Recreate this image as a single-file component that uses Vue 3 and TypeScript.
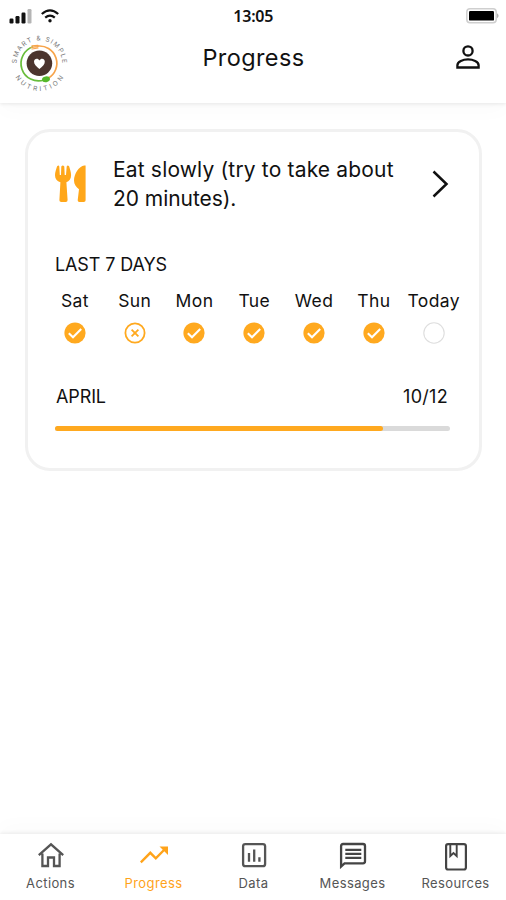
<script setup lang="ts">
type DayState = 'done' | 'missed' | 'open'

interface Day {
  label: string
  state: DayState
}

const days: Day[] = [
  { label: 'Sat', state: 'done' },
  { label: 'Sun', state: 'missed' },
  { label: 'Mon', state: 'done' },
  { label: 'Tue', state: 'done' },
  { label: 'Wed', state: 'done' },
  { label: 'Thu', state: 'done' },
  { label: 'Today', state: 'open' },
]

const completed = 10
const total = 12
const percent = `${(completed / total) * 99.6}%`
</script>

<template>
  <div class="screen">
    <header class="top">
      <div class="status">
        <div class="signals">
          <svg width="24" height="15" viewBox="0 0 24 15">
            <rect x="0.5" y="9.5" width="4" height="5" rx="1.2" fill="#111" />
            <rect x="6.5" y="7" width="4" height="7.5" rx="1.2" fill="#111" />
            <rect x="12.5" y="3.5" width="4" height="11" rx="1.2" fill="#111" />
            <rect x="18.5" y="0" width="4" height="14.5" rx="1.2" fill="#b5b5b5" />
          </svg>
          <svg class="wifi" width="18" height="14" viewBox="0 0 18 14" fill="none" stroke="#111" stroke-width="2.2">
            <path d="M0.8 5Q9-2.4 17.2 5" />
            <path d="M4.2 8.7Q9 4.6 13.8 8.7" />
            <circle cx="9" cy="11.7" r="1.7" fill="#111" stroke="none" />
          </svg>
        </div>
        <div class="clock">13:05</div>
        <svg class="battery" width="34" height="16" viewBox="0 0 34 16">
          <rect x="0.8" y="0.8" width="29.4" height="14" rx="3.2" fill="#fff" stroke="#cfcfcf" stroke-width="1.5" />
          <rect x="3" y="3" width="25" height="9.6" rx="1.2" fill="#000" />
          <path d="M31.4 5.2Q33.4 7.7 31.4 10.2Z" fill="#888" />
        </svg>
      </div>
      <div class="bar">
        <svg class="logo" width="60" height="60" viewBox="0 0 60 60">
          <defs>
            <path id="arc-top" d="M6.7 31.3A22.8 22.8 0 0 1 52.3 31.3" />
            <path id="arc-bottom" d="M3.5 41.5A28 28 0 0 0 55.5 41.5" />
          </defs>
          <text class="logo-text"><textPath href="#arc-top" startOffset="0" textLength="71">SMART &amp; SIMPLE</textPath></text>
          <text class="logo-text"><textPath href="#arc-bottom" startOffset="4" textLength="58">NUTRITION</textPath></text>
          <circle cx="29.4" cy="31.3" r="12.8" fill="#4b342e" />
          <path d="M23 14.8A17.3 17.3 0 0 0 34 48" fill="none" stroke="#68bd3b" stroke-width="1.7" />
          <path d="M27 14.2A17.3 17.3 0 0 1 38 46.4" fill="none" stroke="#f7a44b" stroke-width="1.7" />
          <path d="M21 15.5L28 14.6M22 17L28 16M22 13.9L28 13.3" stroke="#f7a44b" stroke-width="1.2" stroke-linecap="round" />
          <ellipse cx="36" cy="47.3" rx="4" ry="2.9" fill="#55b82a" transform="rotate(-10 36 47.3)" />
          <path d="M29.4 37C26 34.4 24 32.2 24 29.6C24 26.4 28 25.6 29.4 28.4C31 25.6 34.8 26.4 34.8 29.6C34.8 32.2 33 34.4 29.4 37Z" fill="#fff" />
        </svg>
        <h1 class="title">Progress</h1>
        <svg class="person" width="24" height="24" viewBox="0 0 24 24" fill="none" stroke="#111" stroke-width="2.3">
          <circle cx="12" cy="5.9" r="4.6" />
          <path d="M1.4 22.5V20.3C1.4 16.6 7 14.4 12 14.4S22.6 16.6 22.6 20.3V22.5Z" />
        </svg>
      </div>
    </header>

    <main class="content">
      <section class="card">
        <div class="habit">
          <svg class="cutlery" width="32" height="38" viewBox="0 0 32 38" fill="#ffa71a">
            <path d="M2.1 1.2Q3.8-.2 4.3 1.5L4.8 10H6L6.3 1.5Q7.8-.4 9.3 1.5L9.7 10H11L11.7 1.5Q12.5-.2 14.1 1.2C15 4 16.1 7.3 16.1 10.2C16.1 14 14.1 16.2 11.4 17.3L12.6 35Q12.6 37 10.8 37H6.2Q4.3 37 4.4 35L5.4 17.3C2 16.2 0 14 0 10.2C0 7.3 1.2 4 2.1 1.2Z" />
            <path d="M29.3.4H30.6V35.2Q30.6 37 28.8 37H24.4Q22.6 37 22.7 35.2L24 24.2C21.2 22 19 19.5 19 15.5C19 8.5 24 1.2 29.3.4Z" />
          </svg>
          <p class="habit-name">Eat slowly (try to take about<br /><span class="second">20 minutes).</span></p>
          <svg class="chevron" width="17" height="28" viewBox="0 0 17 28" fill="none" stroke="#111" stroke-width="2.5">
            <path d="M1.5 1.5L14.5 14L1.5 26.5" />
          </svg>
        </div>

        <h2 class="label week-label">LAST 7 DAYS</h2>
        <div class="week">
          <div v-for="day in days" :key="day.label" class="day">
            <span class="day-name">{{ day.label }}</span>
            <svg width="22" height="22" viewBox="0 0 22 22" fill="none">
              <template v-if="day.state === 'done'">
                <circle cx="11" cy="11" r="10.6" fill="#ffa91f" />
                <path d="M4.8 11.2L9 15.2L17.2 7" stroke="#fff" stroke-width="2.1" />
              </template>
              <template v-else-if="day.state === 'missed'">
                <circle cx="11" cy="11" r="9.6" stroke="#ffa91f" stroke-width="1.8" />
                <path d="M7.6 7.6L14.4 14.4M14.4 7.6L7.6 14.4" stroke="#ffa91f" stroke-width="1.8" />
              </template>
              <circle v-else cx="11" cy="11" r="10.2" stroke="#dedede" stroke-width="1.1" />
            </svg>
          </div>
        </div>

        <div class="month">
          <span class="label month-name">APRIL</span>
          <span class="label count">{{ completed }}/{{ total }}</span>
        </div>
        <div class="track"><div class="fill" :style="{ width: percent }"></div></div>
      </section>
    </main>

    <nav class="tabs">
      <a class="tab">
        <svg width="28" height="28" viewBox="0 0 28 28" fill="none" stroke="#555" stroke-width="2.3">
          <path d="M1.8 14.2L14 3.3L26.2 14.2M5.4 12.5V25H11V16.5H17V25H22.6V12.5" />
        </svg>
        <span>Actions</span>
      </a>
      <a class="tab active">
        <svg width="28" height="28" viewBox="0 0 28 28" fill="none" stroke="#ffa31a" stroke-width="2.4">
          <path d="M.8 21.3L10.3 11.8L15.8 17.3L25 8" />
          <path d="M19.5 5.5H28V14Z" fill="#ffa31a" stroke="none" />
        </svg>
        <span>Progress</span>
      </a>
      <a class="tab">
        <svg width="28" height="28" viewBox="0 0 28 28" fill="none" stroke="#555" stroke-width="2.3">
          <rect x="3.1" y="3.1" width="22" height="22" rx="2.2" />
          <path d="M9 12V20.8M14.2 8.5V20.8M19.4 16.2V20.8" />
        </svg>
        <span>Data</span>
      </a>
      <a class="tab">
        <svg width="28" height="28" viewBox="0 0 28 28" fill="none" stroke="#444" stroke-width="2.3">
          <path d="M2.1 25.5V5Q2.1 3 4.1 3H24Q26 3 26 5V20.3Q26 22.3 24 22.3H5.5Z" />
          <path d="M6.3 8.8H22.3M6.3 12.8H22.3M6.3 16.8H22.3" />
        </svg>
        <span>Messages</span>
      </a>
      <a class="tab">
        <svg class="book" width="28" height="28" viewBox="0 0 28 28" fill="none" stroke="#444" stroke-width="2.2">
          <rect x="4.1" y="3.1" width="19.8" height="25.4" rx="2" />
          <path d="M8.3 3V15L11.5 12L14.7 15V3" stroke-width="1.9" />
        </svg>
        <span>Resources</span>
      </a>
    </nav>
  </div>
</template>

<style>
body {
  margin: 0;
  background: #fff;
}
</style>

<style scoped>
.screen {
  display: flex;
  flex-direction: column;
  width: 506px;
  height: 900px;
  overflow: hidden;
  background: #fff;
  color: #111;
  font-family: Inter, 'Liberation Sans', sans-serif;
}
svg {
  display: block;
  flex: none;
}
.top {
  height: 103px;
  flex: none;
  box-shadow: 0 1px 4px rgba(0, 0, 0, 0.09), 0 8px 20px rgba(0, 0, 0, 0.02);
}
.status {
  display: grid;
  grid-template-columns: 1fr 60px 1fr;
  align-items: center;
  height: 32px;
  box-sizing: border-box;
  padding: 0 6px 0 9px;
}
.signals {
  display: flex;
  align-items: center;
  gap: 8px;
}
.clock {
  margin-left: -2.5px;
  font-family: 'Noto Sans', sans-serif;
  font-size: 16px;
  font-weight: 600;
  line-height: 32px;
  text-align: center;
  letter-spacing: -0.2px;
}
.battery {
  justify-self: end;
}
.bar {
  display: grid;
  grid-template-columns: 60px 1fr 60px;
  align-items: center;
  height: 60px;
  padding: 0 10px;
}
.logo {
  overflow: visible;
}
.logo-text {
  font-size: 6.5px;
  fill: #777;
}
.title {
  margin: -9px 0 0 1px;
  font-size: 23.5px;
  font-weight: 400;
  line-height: 30px;
  text-align: center;
  letter-spacing: 0.4px;
}
.person {
  margin: -11px 0 0 20px;
}
.content {
  flex: 1;
  padding: 26px 24px 0 25px;
}
.card {
  box-sizing: border-box;
  height: 342px;
  padding: 24px 29px 0 27px;
  border: 3px solid #f1f1f1;
  border-radius: 25px;
}
.habit {
  display: flex;
}
.cutlery {
  margin-top: 9px;
}
.habit-name {
  width: 290px;
  margin: 0 0 0 26px;
  font-size: 21px;
  line-height: 28.5px;
  letter-spacing: 0.17px;
  white-space: nowrap;
}
.second {
  letter-spacing: -0.05px;
}
.chevron {
  margin: 14px 0 0 29px;
}
.label {
  margin: 0;
  font-size: 18px;
  font-weight: 400;
  line-height: 22px;
  letter-spacing: -0.12px;
}
.week-label {
  margin-top: 41px;
}
.week {
  display: grid;
  grid-template-columns: repeat(7, 59.8px);
  margin: 14px 0 0 -10px;
}
.day {
  display: flex;
  flex-direction: column;
  align-items: center;
  gap: 10px;
}
.day-name {
  font-size: 17.5px;
  line-height: 22px;
  letter-spacing: 0.4px;
}
.month {
  display: flex;
  justify-content: space-between;
  margin: 42px 2px 0 1px;
}
.count {
  letter-spacing: 0.3px;
}
.track {
  height: 5px;
  margin-top: 18px;
  border-radius: 3px;
  background: #dadada;
}
.fill {
  height: 5px;
  border-radius: 3px;
  background: #ffa91f;
}
.tabs {
  display: grid;
  grid-template-columns: 101px 105px 95px 103px 103px;
  flex: none;
  height: 66px;
  box-shadow: 0 -1px 4px rgba(0, 0, 0, 0.08), 0 -8px 20px rgba(0, 0, 0, 0.02);
}
.tab {
  display: flex;
  flex-direction: column;
  align-items: center;
  gap: 5px;
  padding-top: 7px;
  color: #555;
  font-size: 13px;
  line-height: 18px;
  letter-spacing: 0.4px;
}
.tab.active {
  color: #ffa31a;
}
.book {
  overflow: visible;
}
</style>
